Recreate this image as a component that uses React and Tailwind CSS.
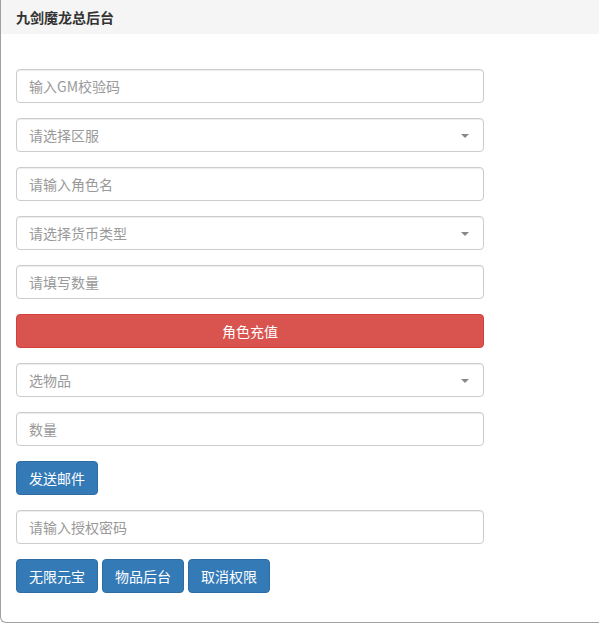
import React from 'react';

const font = { fontFamily: '"Noto Sans CJK SC", "Liberation Sans", sans-serif' };

function TextField({ placeholder }) {
  return (
    <input
      type="text"
      placeholder={placeholder}
      className="block w-[468px] h-[34px] px-3 text-[14px] text-[#555] bg-white border border-[#ccc] rounded-[4px] shadow-[inset_0_1px_1px_rgba(0,0,0,0.075)] placeholder:text-[#999] outline-none"
      style={font}
    />
  );
}

function SelectField({ placeholder }) {
  return (
    <div className="relative w-[468px] h-[34px] flex items-center px-3 text-[14px] text-[#999] bg-white border border-[#ccc] rounded-[4px] shadow-[inset_0_1px_1px_rgba(0,0,0,0.075)]">
      <span>{placeholder}</span>
      <span className="absolute right-[14px] top-[15px] w-0 h-0 border-l-[4px] border-r-[4px] border-t-[4px] border-l-transparent border-r-transparent border-t-[#888]" />
    </div>
  );
}

function BlueButton({ children }) {
  return (
    <button className="w-[82px] h-[34px] text-[14px] text-white bg-[#337ab7] border border-[#2e6da4] rounded-[4px]">
      {children}
    </button>
  );
}

export default function App() {
  return (
    <div className="w-[599px] h-[623px] bg-white" style={font}>
      <div className="h-[623px] border-l border-b border-[#a0a0a0] rounded-bl-[6px] bg-white">
        {/* Header */}
        <div className="h-[34px] bg-[#f5f5f5] flex items-center px-[15px]">
          <h3 className="text-[14px] font-bold text-[#333]">九剑魔龙总后台</h3>
        </div>

        {/* Body */}
        <div className="pt-[35px] px-[15px] flex flex-col gap-[15px]">
          <TextField placeholder="输入GM校验码" />
          <SelectField placeholder="请选择区服" />
          <TextField placeholder="请输入角色名" />
          <SelectField placeholder="请选择货币类型" />
          <TextField placeholder="请填写数量" />
          <button className="w-[468px] h-[34px] text-[14px] text-white bg-[#d9534f] border border-[#d43f3a] rounded-[4px]">
            角色充值
          </button>
          <SelectField placeholder="选物品" />
          <TextField placeholder="数量" />
          <div>
            <BlueButton>发送邮件</BlueButton>
          </div>
          <TextField placeholder="请输入授权密码" />
          <div className="flex gap-[4px]">
            <BlueButton>无限元宝</BlueButton>
            <BlueButton>物品后台</BlueButton>
            <BlueButton>取消权限</BlueButton>
          </div>
        </div>
      </div>
    </div>
  );
}
